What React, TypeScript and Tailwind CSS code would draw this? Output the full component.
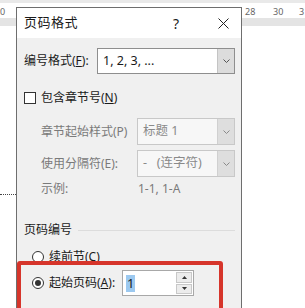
import { ReactNode } from "react";

const font = "font-['Segoe_UI','Noto_Sans','Noto_Sans_CJK_SC',sans-serif]";

const Chevron = ({ color = "#606060" }: { color?: string }) => (
  <svg width="7" height="4" viewBox="0 0 7 4">
    <path d="M0.5 0.5 L3.5 3.5 L6.5 0.5" fill="none" stroke={color} strokeWidth="1" />
  </svg>
);

const Select = ({
  value,
  disabled,
  className,
}: {
  value: ReactNode;
  disabled?: boolean;
  className?: string;
}) => (
  <div
    className={`flex border ${
      disabled ? "border-[#c8c8c8] bg-[#f7f7f7] text-[#8a8a8a]" : "border-[#8e8e8e] bg-white text-[#1a1a1a]"
    } ${className ?? ""}`}
  >
    <div className="flex-1 flex items-center pl-[5px] text-[12.5px]">{value}</div>
    <div
      className={`w-[17px] flex items-center justify-center border-l ${
        disabled ? "bg-[#dedede] border-[#d0d0d0]" : "bg-[#dcdcdc] border-[#c4c4c4]"
      }`}
    >
      <Chevron color={disabled ? "#8a8a8a" : "#555"} />
    </div>
  </div>
);

const Radio = ({ checked }: { checked?: boolean }) => (
  <div className="w-[12px] h-[12px] rounded-full border border-[#333] bg-white flex items-center justify-center">
    {checked && <div className="w-[6px] h-[6px] rounded-full bg-[#333]" />}
  </div>
);

export default function App() {
  return (
    <div className={`relative w-[305px] h-[308px] bg-white overflow-hidden ${font}`}>
      {/* ruler */}
      <div className="h-[3px] bg-[#e9e9e9]" />
      <div className="relative h-[15px] bg-white text-[9px] text-[#666]">
        <span className="absolute left-0 top-[2px]">0</span>
        <span className="absolute left-[245px] top-[2px]">28</span>
        <span className="absolute left-[273px] top-[2px]">30</span>
        <span className="absolute left-[299px] top-[2px]">3</span>
      </div>
      <div className="h-[8px] bg-[#e4e4e4]" />

      {/* dotted page edge */}
      <div className="absolute left-0 top-[194px] w-[16px] border-t border-dotted border-[#444]" />

      {/* dialog */}
      <div className="absolute left-[16px] top-[7px] w-[226px] h-[320px] border border-[#6e6e6e] bg-[#f0f0f0]">
        <div className="h-[30px] bg-white flex items-center pl-[7px] text-[13px] text-[#1a1a1a]">
          <span className="flex-1 tracking-[0.5px]">页码格式</span>
          <span className="w-[14px] text-[14px] mr-[35px] text-center">?</span>
          <svg width="11" height="11" viewBox="0 0 11 11" className="mr-[12px]">
            <path d="M0.5 0.5 L10.5 10.5 M10.5 0.5 L0.5 10.5" stroke="#222" strokeWidth="1" />
          </svg>
        </div>

        <div className="flex flex-col pl-[7px] pr-[6px] text-[12px] text-[#1a1a1a]">
          <div className="mt-[10px] flex items-center h-[26px]">
            <span className="w-[73px]">
              编号格式(<span className="underline">F</span>):
            </span>
            <Select value="1, 2, 3, ..." className="flex-1 h-[26px]" />
          </div>

          <div className="mt-[17px] flex items-center h-[14px]">
            <div className="w-[12px] h-[12px] border border-[#333] bg-white" />
            <span className="ml-[5px]">
              包含章节号(<span className="underline">N</span>)
            </span>
          </div>

          <div className="mt-[13px] flex items-center h-[27px] pl-[17px] text-[#7a7a7a]">
            <span className="w-[96px]">章节起始样式(P)</span>
            <Select value="标题 1" disabled className="flex-1 h-[27px]" />
          </div>

          <div className="mt-[5px] flex items-center h-[27px] pl-[17px] text-[#7a7a7a]">
            <span className="w-[96px]">使用分隔符(E):</span>
            <Select
              value={
                <span>
                  -&nbsp;&nbsp;&nbsp;(连字符)
                </span>
              }
              disabled
              className="flex-1 h-[27px]"
            />
          </div>

          <div className="mt-[4px] flex items-center h-[16px] pl-[17px] text-[#7a7a7a]">
            <span className="w-[97px]">示例:</span>
            <span>1-1, 1-A</span>
          </div>

          <div className="mt-[25px] flex items-center h-[16px]">
            <span>页码编号</span>
            <div className="flex-1 ml-[6px] border-t border-[#dcdcdc]" />
          </div>

          <div className="mt-[11px] flex items-center h-[16px] pl-[8px]">
            <Radio />
            <span className="ml-[5px]">
              续前节(<span className="underline">C</span>)
            </span>
          </div>

          <div className="mt-[5px] flex items-center h-[26px] pl-[8px]">
            <Radio checked />
            <span className="ml-[5px] w-[73px]">
              起始页码(<span className="underline">A</span>):
            </span>
            <div className="w-[72px] h-[26px] flex border border-[#a8a8a8] bg-white">
              <div className="flex-1 flex items-center pl-[3px]">
                <span className="bg-[#9cc9f0] px-[1px] leading-[17px] text-[13px]">1</span>
              </div>
              <div className="w-[16px] my-[1px] mr-[1px] flex flex-col gap-[1px]">
                <div className="flex-1 bg-[#ececec] border border-[#c8c8c8] flex items-center justify-center">
                  <svg width="5" height="3" viewBox="0 0 5 3">
                    <path d="M0 3 L2.5 0 L5 3 Z" fill="#333" />
                  </svg>
                </div>
                <div className="flex-1 bg-[#ececec] border border-[#c8c8c8] flex items-center justify-center">
                  <svg width="5" height="3" viewBox="0 0 5 3">
                    <path d="M0 0 L2.5 3 L5 0 Z" fill="#333" />
                  </svg>
                </div>
              </div>
            </div>
          </div>
        </div>
      </div>

      {/* red annotation box */}
      <div className="absolute left-[17px] top-[261px] w-[206px] h-[70px] border-[4px] border-[#d6352b] rounded-[3px]" />
    </div>
  );
}
